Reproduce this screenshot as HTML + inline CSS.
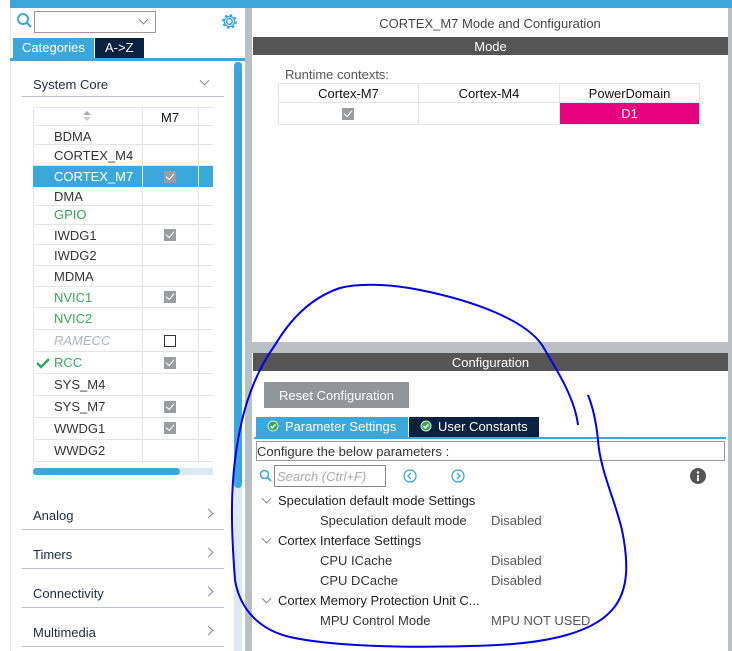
<!DOCTYPE html>
<html><head><meta charset="utf-8"><style>
*{margin:0;padding:0;box-sizing:border-box}
body{width:732px;height:651px;overflow:hidden;background:#fff;font-family:"Liberation Sans",sans-serif;font-size:13px;color:#333;position:relative}
.a{position:absolute}
.t{position:absolute;white-space:nowrap}
.cb{position:absolute;width:12px;height:12px;background:#9a9da0;}
.cb:after{content:"";position:absolute;left:2px;top:2px;width:7px;height:4px;border-left:1.5px solid #fff;border-bottom:1.5px solid #fff;transform:rotate(-50deg)}
.row{position:absolute;left:33px;width:180px;border-bottom:1px solid #e2e4e6;height:21px}
.lbl{position:absolute;left:21px;top:3px;font-size:13px;color:#333}
.cat{position:absolute;left:22px;width:202px;border-bottom:1px solid #b8c0c6;height:24px}
.cat span{position:absolute;left:11px;top:2px;color:#1f2a44;font-size:13px}
.chev{position:absolute;right:12px;top:4px;width:7px;height:7px;border-right:1px solid #888;border-top:1px solid #888;transform:rotate(45deg)}
.ex{position:absolute;width:7px;height:7px;border-right:1px solid #888;border-bottom:1px solid #888;transform:rotate(45deg)}
</style></head><body>
<div class="a" style="left:10px;top:0;width:722px;height:8px;background:#3ca7db"></div>
<div class="a" style="left:10px;top:8px;width:1px;height:643px;background:#e4e6e8"></div>
<svg class="a" style="left:16px;top:12px" width="18" height="18"><circle cx="7" cy="7" r="5" fill="none" stroke="#3ca7db" stroke-width="2"/><line x1="10.5" y1="10.5" x2="15" y2="15" stroke="#3ca7db" stroke-width="2.2"/></svg>
<div class="a" style="left:34px;top:11px;width:122px;height:22px;border:1px solid #999;background:#fff"></div>
<div class="ex" style="left:140px;top:16px"></div>
<svg class="a" style="left:220px;top:12px" width="19" height="19" viewBox="0 0 20 20"><circle cx="10" cy="10" r="3" fill="none" stroke="#3ca7db" stroke-width="1.6"/><circle cx="10" cy="10" r="6.5" fill="none" stroke="#3ca7db" stroke-width="2.6" stroke-dasharray="2.6 2.5"/><circle cx="10" cy="10" r="5.3" fill="none" stroke="#3ca7db" stroke-width="1.4"/></svg>
<div class="a" style="left:13px;top:38px;width:81px;height:21px;background:#3ca7db"></div>
<div class="t" style="left:22px;top:40px;color:#fff;font-size:13px">Categories</div>
<div class="a" style="left:95px;top:38px;width:49px;height:21px;background:#0a2240"></div>
<div class="t" style="left:105px;top:40px;color:#fff;font-size:13px">A-&gt;Z</div>
<div class="a" style="left:10px;top:58px;width:235px;height:3px;background:#3ca7db"></div>
<div class="a" style="left:234px;top:62px;width:8px;height:589px;background:#dbe9f5"></div>
<div class="a" style="left:234px;top:62px;width:8px;height:426px;background:#3ca7db;border-radius:4px"></div>
<div class="a" style="left:245px;top:8px;width:7px;height:643px;background:#b8c0c6"></div>

<div class="t" style="left:33px;top:77px;color:#1f2a44">System Core</div>
<div class="ex" style="left:201px;top:77px"></div>
<div class="a" style="left:22px;top:96px;width:202px;height:1px;background:#b8c0c6"></div>

<div class="a" style="left:33px;top:107px;width:1px;height:356px;background:#e2e4e6"></div>
<div class="a" style="left:142px;top:107px;width:1px;height:356px;background:#e2e4e6"></div>
<div class="a" style="left:198px;top:107px;width:1px;height:356px;background:#e2e4e6"></div>
<div class="a" style="left:33px;top:107px;width:180px;height:1px;background:#e2e4e6"></div>
<div class="row" style="top:108px;height:18px"><svg class="a" style="left:50px;top:2px" width="8" height="12"><path d="M0 5L4 1L8 5Z" fill="#aaa"/><path d="M0 7L4 11L8 7Z" fill="#ccc"/></svg><div class="t" style="left:128px;top:2px;color:#111">M7</div></div>
<div class="row" style="top:126px;height:19px"><div class="lbl">BDMA</div></div>
<div class="row" style="top:145px"><div class="lbl">CORTEX_M4</div></div>
<div class="row" style="top:166px;background:#3ca7db;border-color:#3ca7db"><div class="lbl" style="color:#fff">CORTEX_M7</div><div class="cb" style="left:131px;top:5px"></div><div class="a" style="left:109px;top:0;width:1px;height:21px;background:#e2e4e6"></div><div class="a" style="left:165px;top:0;width:1px;height:21px;background:#e2e4e6"></div></div>
<div class="row" style="top:187px;height:19px"><div class="lbl" style="top:2px">DMA</div></div>
<div class="row" style="top:206px;height:19px"><div class="lbl" style="top:1px;color:#3aa55b">GPIO</div></div>
<div class="row" style="top:225px;height:20px"><div class="lbl">IWDG1</div><div class="cb" style="left:131px;top:4px"></div></div>
<div class="row" style="top:245px"><div class="lbl">IWDG2</div></div>
<div class="row" style="top:266px"><div class="lbl">MDMA</div></div>
<div class="row" style="top:287px"><div class="lbl" style="color:#3aa55b">NVIC1</div><div class="cb" style="left:131px;top:4px"></div></div>
<div class="row" style="top:308px;height:22px"><div class="lbl" style="color:#3aa55b">NVIC2</div></div>
<div class="row" style="top:330px;height:22px"><div class="lbl" style="color:#b0b4bc;font-style:italic">RAMECC</div><div class="a" style="left:131px;top:5px;width:12px;height:12px;border:1px solid #333"></div></div>
<div class="row" style="top:352px;height:22px"><svg class="a" style="left:3px;top:5px" width="14" height="12"><path d="M1 6L5 10L13 2" fill="none" stroke="#3aa55b" stroke-width="2.5"/></svg><div class="lbl" style="color:#3aa55b">RCC</div><div class="cb" style="left:131px;top:5px"></div></div>
<div class="row" style="top:374px;height:22px"><div class="lbl">SYS_M4</div></div>
<div class="row" style="top:396px;height:22px"><div class="lbl">SYS_M7</div><div class="cb" style="left:131px;top:5px"></div></div>
<div class="row" style="top:418px;height:22px"><div class="lbl">WWDG1</div><div class="cb" style="left:131px;top:4px"></div></div>
<div class="row" style="top:440px;height:22px"><div class="lbl">WWDG2</div></div>
<div class="a" style="left:33px;top:468px;width:180px;height:7px;background:#dbe9f5"></div>
<div class="a" style="left:33px;top:468px;width:147px;height:7px;background:#3ca7db;border-radius:4px"></div>

<div class="cat" style="top:506px"><span>Analog</span><div class="chev"></div></div>
<div class="cat" style="top:545px"><span>Timers</span><div class="chev"></div></div>
<div class="cat" style="top:584px"><span>Connectivity</span><div class="chev"></div></div>
<div class="cat" style="top:623px"><span>Multimedia</span><div class="chev"></div></div>

<div class="a" style="left:728px;top:8px;width:4px;height:643px;background:#b8c0c6"></div>
<div class="t" style="left:252px;top:16px;width:476px;text-align:center;color:#444">CORTEX_M7 Mode and Configuration</div>
<div class="a" style="left:253px;top:37px;width:475px;height:18px;background:#545554"></div>
<div class="t" style="left:253px;top:39px;width:475px;text-align:center;color:#fff">Mode</div>
<div class="t" style="left:285px;top:67px;color:#555">Runtime contexts:</div>
<div class="a" style="left:278px;top:83px;width:422px;height:42px;border:1px solid #e2e4e6"></div>
<div class="a" style="left:278px;top:102px;width:422px;height:1px;background:#e2e4e6"></div>
<div class="a" style="left:418px;top:83px;width:1px;height:42px;background:#e2e4e6"></div>
<div class="a" style="left:559px;top:83px;width:1px;height:42px;background:#e2e4e6"></div>
<div class="t" style="left:279px;top:86px;width:139px;text-align:center;color:#111">Cortex-M7</div>
<div class="t" style="left:419px;top:86px;width:140px;text-align:center;color:#111">Cortex-M4</div>
<div class="t" style="left:560px;top:86px;width:139px;text-align:center;color:#111">PowerDomain</div>
<div class="cb" style="left:342px;top:108px"></div>
<div class="a" style="left:560px;top:103px;width:139px;height:21px;background:#e6007e"></div>
<div class="t" style="left:560px;top:106px;width:139px;text-align:center;color:#fff">D1</div>

<div class="a" style="left:252px;top:342px;width:476px;height:11px;background:#b8c0c6"></div>
<div class="a" style="left:253px;top:353px;width:475px;height:18px;background:#545554"></div>
<div class="t" style="left:253px;top:355px;width:475px;text-align:center;color:#fff">Configuration</div>
<div class="a" style="left:264px;top:382px;width:145px;height:26px;background:#8f969c"></div>
<div class="t" style="left:264px;top:388px;width:145px;text-align:center;color:#fff">Reset Configuration</div>
<div class="a" style="left:256px;top:417px;width:152px;height:20px;background:#3ca7db"></div>
<div class="a" style="left:409px;top:417px;width:130px;height:20px;background:#0a2240"></div>
<svg class="a" style="left:267px;top:420px" width="12" height="12"><circle cx="6" cy="6" r="5.5" fill="#c9f0d6"/><circle cx="6" cy="6" r="4.5" fill="#3aa55b"/><path d="M3.5 6L5.3 7.8L8.5 4.5" stroke="#fff" stroke-width="1.5" fill="none"/></svg>
<div class="t" style="left:285px;top:419px;color:#fff">Parameter Settings</div>
<svg class="a" style="left:420px;top:420px" width="12" height="12"><circle cx="6" cy="6" r="5.5" fill="#c9f0d6"/><circle cx="6" cy="6" r="4.5" fill="#3aa55b"/><path d="M3.5 6L5.3 7.8L8.5 4.5" stroke="#fff" stroke-width="1.5" fill="none"/></svg>
<div class="t" style="left:438px;top:419px;color:#fff">User Constants</div>
<div class="a" style="left:254px;top:437px;width:472px;height:2px;background:#3ca7db"></div>
<div class="a" style="left:256px;top:441px;width:469px;height:20px;border:1px solid #999"></div>
<div class="t" style="left:257px;top:444px;color:#333">Configure the below parameters :</div>
<svg class="a" style="left:259px;top:469px" width="14" height="14"><circle cx="5.5" cy="5.5" r="4" fill="none" stroke="#3ca7db" stroke-width="1.6"/><line x1="8.5" y1="8.5" x2="12" y2="12" stroke="#3ca7db" stroke-width="1.8"/></svg>
<div class="a" style="left:274px;top:465px;width:112px;height:22px;border:1px solid #888"></div>
<div class="t" style="left:277px;top:469px;color:#aaa;font-style:italic">Search (Ctrl+F)</div>
<svg class="a" style="left:403px;top:469px" width="14" height="14"><circle cx="7" cy="7" r="6" fill="none" stroke="#3ca7db" stroke-width="1.3"/><path d="M8 4L5 7L8 10" fill="none" stroke="#3ca7db" stroke-width="1.3"/></svg>
<svg class="a" style="left:451px;top:469px" width="14" height="14"><circle cx="7" cy="7" r="6" fill="none" stroke="#3ca7db" stroke-width="1.3"/><path d="M6 4L9 7L6 10" fill="none" stroke="#3ca7db" stroke-width="1.3"/></svg>
<svg class="a" style="left:690px;top:468px" width="16" height="16"><circle cx="8" cy="8" r="8" fill="#555"/><rect x="7" y="7" width="2" height="6" fill="#fff"/><circle cx="8" cy="4.5" r="1.2" fill="#fff"/></svg>

<div class="ex" style="left:263px;top:495px"></div>
<div class="t" style="left:278px;top:493px;color:#222">Speculation default mode Settings</div>
<div class="t" style="left:320px;top:513px;color:#333">Speculation default mode</div>
<div class="t" style="left:491px;top:513px;color:#555">Disabled</div>
<div class="ex" style="left:263px;top:535px"></div>
<div class="t" style="left:278px;top:533px;color:#222">Cortex Interface Settings</div>
<div class="t" style="left:320px;top:553px;color:#333">CPU ICache</div>
<div class="t" style="left:491px;top:553px;color:#555">Disabled</div>
<div class="t" style="left:320px;top:573px;color:#333">CPU DCache</div>
<div class="t" style="left:491px;top:573px;color:#555">Disabled</div>
<div class="ex" style="left:263px;top:595px"></div>
<div class="t" style="left:278px;top:593px;color:#222">Cortex Memory Protection Unit C...</div>
<div class="t" style="left:320px;top:613px;color:#333">MPU Control Mode</div>
<div class="t" style="left:491px;top:613px;color:#555">MPU NOT USED</div>

<svg class="a" style="left:0;top:0" width="732" height="651"><g fill="none" stroke="#0000e0" stroke-width="2">
<path d="M578 425C575 400 560 375 545 350C530 320 470 300 420 290C390 284 360 283 340 288C310 298 290 320 275 345C250 380 240 420 235 460C230 500 232 540 235 580C240 610 260 630 290 637C330 646 400 648 470 646C540 645 590 635 612 610C630 590 628 560 622 530C615 500 600 470 598 440C596 420 592 405 588 395"/>
</g></svg>
</body></html>
